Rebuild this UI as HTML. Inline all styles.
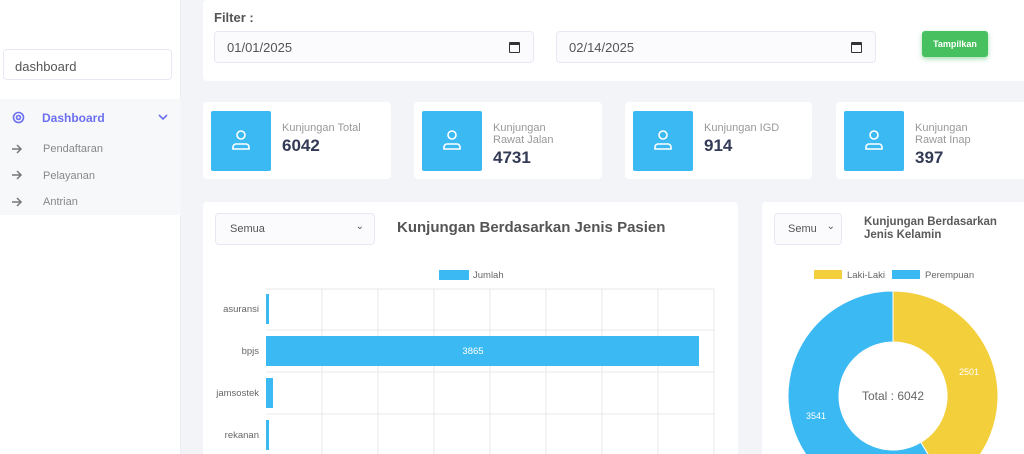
<!DOCTYPE html><html><head><style>
*{box-sizing:border-box;margin:0;padding:0}
html,body{width:1024px;height:454px;overflow:hidden}
body{background:#f3f4f8;font-family:"Liberation Sans",sans-serif;position:relative;color:#555}
.a{position:absolute}
.card{position:absolute;background:#fff;border-radius:4px}
.inp{position:absolute;background:#fbfbfe;border:1px solid #e8e8f4;border-radius:4px;font-size:13px;color:#555}
.ico{position:absolute;left:8px;top:9px;width:60px;height:60px;background:#3bb9f2;border-radius:2px}
.lbl{position:absolute;left:79px;top:20px;font-size:11px;color:#999;line-height:12px}
.num{position:absolute;left:79px;font-size:17px;font-weight:bold;color:#333a55}
.cal{position:absolute;right:13px;top:10px;width:11px;height:11px;border:1.5px solid #333;border-top-width:3px;border-radius:1px}
</style></head><body>
<div class="a" style="left:0;top:0;width:181px;height:454px;background:#fff;border-right:1px solid #eceef3"></div>
<div class="inp" style="left:3px;top:49px;width:169px;height:31px;background:#fff;padding:9px 11px">dashboard</div>
<div class="a" style="left:0;top:99px;width:181px;height:116px;background:#f7f8fa"></div>
<svg class="a" style="left:12px;top:111px" width="13" height="13"><circle cx="6.5" cy="6.5" r="5" fill="none" stroke="#6c6ff0" stroke-width="1.6"/><circle cx="6.5" cy="6.5" r="2" fill="none" stroke="#6c6ff0" stroke-width="1.6"/></svg>
<div class="a" style="left:42px;top:111px;font-size:12px;font-weight:bold;color:#6c6ff0">Dashboard</div>
<svg class="a" style="left:158px;top:114px" width="10" height="7"><path d="M1 1l4 4 4-4" fill="none" stroke="#6c6ff0" stroke-width="1.6"/></svg>
<svg class="a" style="left:11px;top:143px" width="12" height="64" fill="none" stroke="#777" stroke-width="1.5"><path d="M1 6h9M6 2l4 4-4 4M1 32h9M6 28l4 4-4 4M1 59h9M6 55l4 4-4 4"/></svg>
<div class="a" style="left:43px;top:136px;font-size:11px;color:#888;line-height:26.5px">Pendaftaran<br>Pelayanan<br>Antrian</div>
<div class="card" style="left:203px;top:0;width:830px;height:81px"></div>
<div class="a" style="left:214px;top:10px;font-size:13px;font-weight:bold;color:#555">Filter :</div>
<div class="inp" style="left:214px;top:31px;width:320px;height:32px;padding:8px 12px">01/01/2025<span class="cal"></span></div>
<div class="inp" style="left:556px;top:31px;width:320px;height:32px;padding:8px 12px">02/14/2025<span class="cal"></span></div>
<div class="a" style="left:922px;top:31px;width:66px;height:26px;background:#47c160;border-radius:3px;color:#fff;font-size:9px;font-weight:bold;text-align:center;line-height:26px;box-shadow:0 2px 5px rgba(71,193,96,.5)">Tampilkan</div>

<div class="card" style="left:203px;top:102px;width:188px;height:77px"><div class="ico"></div><div class="lbl">Kunjungan Total</div><div class="num" style="top:34px">6042</div></div>
<div class="card" style="left:414px;top:102px;width:188px;height:77px"><div class="ico"></div><div class="lbl">Kunjungan<br>Rawat Jalan</div><div class="num" style="top:46px">4731</div></div>
<div class="card" style="left:625px;top:102px;width:187px;height:77px"><div class="ico"></div><div class="lbl">Kunjungan IGD</div><div class="num" style="top:34px">914</div></div>
<div class="card" style="left:836px;top:102px;width:200px;height:77px"><div class="ico"></div><div class="lbl">Kunjungan<br>Rawat Inap</div><div class="num" style="top:46px">397</div></div>
<svg class="a" style="left:0;top:0" width="1024" height="200">
<g fill="none" stroke="#fff" stroke-width="1.6">
<circle cx="241" cy="135" r="4"/><path d="M233 149v-2a3 3 0 0 1 3-3h10a3 3 0 0 1 3 3v2z"/>
<circle cx="452" cy="135" r="4"/><path d="M444 149v-2a3 3 0 0 1 3-3h10a3 3 0 0 1 3 3v2z"/>
<circle cx="663" cy="135" r="4"/><path d="M655 149v-2a3 3 0 0 1 3-3h10a3 3 0 0 1 3 3v2z"/>
<circle cx="874" cy="135" r="4"/><path d="M866 149v-2a3 3 0 0 1 3-3h10a3 3 0 0 1 3 3v2z"/>
</g></svg>

<div class="card" style="left:203px;top:202px;width:535px;height:252px;border-radius:4px 4px 0 0"></div>
<div class="inp" style="left:215px;top:213px;width:160px;height:32px;padding:9px 14px;font-size:11px">Semua<span style="position:absolute;right:10px;top:7px;font-size:10px">⌄</span></div>
<div class="a" style="left:397px;top:219px;font-size:15px;font-weight:bold;color:#555">Kunjungan Berdasarkan Jenis Pasien</div>
<svg class="a" style="left:203px;top:260px" width="535" height="194" font-family="Liberation Sans" font-size="9.5" fill="#666">
<rect x="236" y="10" width="30" height="10" fill="#3bb9f2"/><text x="270" y="18">Jumlah</text>
<g stroke="#e8e8e8"><path d="M119 29v170M175 29v170M231 29v170M287 29v170M343 29v170M399 29v170M455 29v170M511 29v170M63 29h448M63 70h448M63 112h448M63 154h448"/></g>
<rect x="63" y="34" width="3" height="30" fill="#3bb9f2"/>
<rect x="63" y="76" width="433" height="30" fill="#3bb9f2"/>
<rect x="63" y="118" width="7" height="30" fill="#3bb9f2"/>
<rect x="63" y="160" width="3" height="30" fill="#3bb9f2"/>
<text x="270" y="94" fill="#fff" text-anchor="middle">3865</text>
<g text-anchor="end"><text x="56" y="52">asuransi</text><text x="56" y="94">bpjs</text><text x="56" y="136">jamsostek</text><text x="56" y="178">rekanan</text></g>
</svg>

<div class="card" style="left:762px;top:202px;width:280px;height:252px;border-radius:4px 4px 0 0"></div>
<div class="inp" style="left:774px;top:213px;width:68px;height:32px;padding:9px 13px;font-size:11px">Semu<span style="position:absolute;right:6px;top:7px;font-size:10px">⌄</span></div>
<div class="a" style="left:864px;top:216px;font-size:11.5px;font-weight:bold;color:#5a5a5a;line-height:13px">Kunjungan Berdasarkan<br>Jenis Kelamin</div>
<svg class="a" style="left:740px;top:260px" width="284" height="194" font-family="Liberation Sans" font-size="9.5">
<rect x="74" y="10" width="28" height="9" fill="#f3cf3c"/><text x="107" y="18" fill="#666">Laki-Laki</text>
<rect x="152" y="10" width="28" height="9" fill="#3bb9f2"/><text x="185" y="18" fill="#666">Perempuan</text>
</svg>
<svg class="a" style="left:0;top:0" width="1024" height="454" font-family="Liberation Sans">
<path d="M893 291A105 105 0 0 1 947.1 486L920.8 442.3A54 54 0 0 0 893 342Z" fill="#f3cf3c" stroke="#fff"/>
<path d="M947.1 486A105 105 0 1 1 893 291L893 342A54 54 0 1 0 920.8 442.3Z" fill="#3bb9f2" stroke="#fff"/>
<text x="893" y="400" text-anchor="middle" font-size="12" fill="#666">Total : 6042</text>
<text x="969" y="375" text-anchor="middle" font-size="9" fill="#fff">2501</text>
<text x="816" y="419" text-anchor="middle" font-size="9" fill="#fff">3541</text>
</svg>
</body></html>
